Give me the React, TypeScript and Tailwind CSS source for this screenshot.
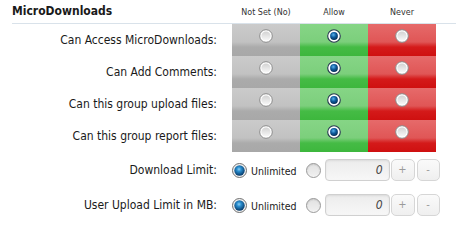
import React from "react";

function GridRadio({ on }: { on: boolean }) {
  if (on) {
    return (
      <svg width="14" height="14" viewBox="0 0 14 14" className="block">
        <defs>
          <radialGradient id="gblue" cx="42%" cy="35%" r="65%">
            <stop offset="0" stopColor="#5ab4ee" />
            <stop offset="0.5" stopColor="#0e5c9e" />
            <stop offset="1" stopColor="#05305a" />
          </radialGradient>
        </defs>
        <circle cx="7" cy="7" r="6.3" fill="#ffffff" stroke="#24384c" strokeWidth="1.1" />
        <circle cx="7" cy="7" r="3.9" fill="url(#gblue)" />
      </svg>
    );
  }
  return (
    <svg width="14" height="14" viewBox="0 0 14 14" className="block">
      <defs>
        <linearGradient id="goff" x1="0" y1="0" x2="0" y2="1">
          <stop offset="0" stopColor="#d2d2d2" />
          <stop offset="1" stopColor="#f8f8f8" />
        </linearGradient>
      </defs>
      <circle cx="7" cy="7" r="6.3" fill="#ffffff" stroke="#8a8a8a" strokeWidth="1" />
      <circle cx="7" cy="7" r="4.6" fill="url(#goff)" />
    </svg>
  );
}

function BigRadio({ on }: { on: boolean }) {
  if (on) {
    return (
      <svg width="15" height="15" viewBox="0 0 15 15" className="block">
        <defs>
          <radialGradient id="bblue" cx="45%" cy="38%" r="60%">
            <stop offset="0" stopColor="#8fd0f4" />
            <stop offset="0.35" stopColor="#2a8fd0" />
            <stop offset="1" stopColor="#083c6c" />
          </radialGradient>
        </defs>
        <circle cx="7.5" cy="7.5" r="7" fill="#f2f2f2" stroke="#6f6f6f" strokeWidth="1" />
        <circle cx="7.5" cy="7.5" r="5.2" fill="url(#bblue)" />
      </svg>
    );
  }
  return (
    <svg width="15" height="15" viewBox="0 0 15 15" className="block">
      <defs>
        <linearGradient id="boff" x1="0" y1="0" x2="0" y2="1">
          <stop offset="0" stopColor="#cfcfcf" />
          <stop offset="1" stopColor="#f8f8f8" />
        </linearGradient>
      </defs>
      <circle cx="7.5" cy="7.5" r="7" fill="url(#boff)" stroke="#9a9a9a" strokeWidth="1" />
      <circle cx="7.5" cy="7.5" r="5.2" fill="#ececec" opacity="0.6" />
    </svg>
  );
}

const rows = [
  "Can Access MicroDownloads:",
  "Can Add Comments:",
  "Can this group upload files:",
  "Can this group report files:",
];

const limits = ["Download Limit:", "User Upload Limit in MB:"];

export default function App() {
  return (
    <div className="w-[456px] h-[236px] bg-white overflow-hidden font-['DejaVu_Sans_Condensed','DejaVu_Sans',sans-serif] text-[#1a1a1a]">
      <div className="ml-[12px]">
        <div className="flex h-[24px] border-b border-[#d9e2ea]">
          <div className="w-[220px] flex items-center text-[12px] font-bold text-[#1a1a1a] pb-[1px]">
            MicroDownloads
          </div>
          <div className="w-[68px] flex items-center justify-center font-['DejaVu_Sans',sans-serif] text-[8px] text-[#333] pt-[3px]">
            Not Set (No)
          </div>
          <div className="w-[68px] flex items-center justify-center font-['DejaVu_Sans',sans-serif] text-[8px] text-[#333] pt-[3px]">
            Allow
          </div>
          <div className="w-[68px] flex items-center justify-center font-['DejaVu_Sans',sans-serif] text-[8px] text-[#333] pt-[3px]">
            Never
          </div>
        </div>

        {rows.map((label) => (
          <div key={label} className="flex h-[32px]">
            <div className="w-[220px] pr-[15px] flex items-center justify-end text-[12px]">
              {label}
            </div>
            <div className="w-[68px] flex justify-center pt-[5px] bg-[linear-gradient(to_bottom,#cbcbcb_0%,#c2c2c2_56%,#ababab_72%,#a8a8a8_100%)]">
              <GridRadio on={false} />
            </div>
            <div className="w-[68px] flex justify-center pt-[5px] bg-[linear-gradient(to_bottom,#86d586_0%,#7ccf7c_56%,#45bb45_72%,#3db73d_100%)]">
              <GridRadio on={true} />
            </div>
            <div className="w-[68px] flex justify-center pt-[5px] bg-[linear-gradient(to_bottom,#e66a6a_0%,#e05656_56%,#d41a1a_72%,#cf1010_100%)]">
              <GridRadio on={false} />
            </div>
          </div>
        ))}

        <div className="mt-[7px] flex flex-col gap-[13px]">
          {limits.map((label) => (
            <div key={label} className="flex h-[22px] items-center">
              <div className="w-[220px] pr-[15px] flex items-center justify-end text-[12px]">
                {label}
              </div>
              <div className="flex items-center">
                <BigRadio on={true} />
                <span className="ml-[4px] text-[10.5px] text-[#1a1a1a] pt-[3px]">Unlimited</span>
                <div className="ml-[9px]">
                  <BigRadio on={false} />
                </div>
                <div className="ml-[4px] w-[65px] h-[22px] rounded-[4px] border border-[#d0d0d0] bg-[linear-gradient(to_bottom,#ececec,#f7f7f7)] shadow-[inset_0_1px_2px_rgba(0,0,0,0.08)] flex items-center justify-end pr-[6px] text-[12px] italic text-[#444]">
                  0
                </div>
                <div className="ml-[1px] w-[24px] h-[22px] rounded-[5px] border border-[#d6d6d6] bg-[linear-gradient(to_bottom,#fafafa,#efefef)] flex items-center justify-center text-[11px] text-[#9a9a9a]">
                  +
                </div>
                <div className="ml-[2px] w-[23px] h-[22px] rounded-[5px] border border-[#d6d6d6] bg-[linear-gradient(to_bottom,#fafafa,#efefef)] flex items-center justify-center text-[11px] text-[#9a9a9a]">
                  -
                </div>
              </div>
            </div>
          ))}
        </div>
      </div>
    </div>
  );
}
